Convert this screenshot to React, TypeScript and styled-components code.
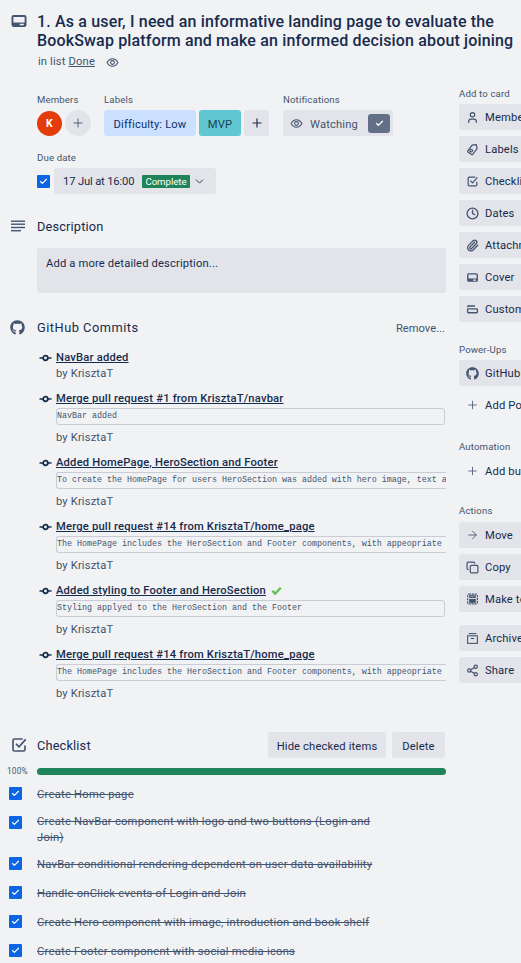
import React from 'react'
import styled, { createGlobalStyle } from 'styled-components'
import { ArrowRight, Check, ChevronDown, Clock, Copy, Paperclip, Plus, Share2, User } from 'lucide-react'
import { FaGithub } from 'react-icons/fa'

const GlobalStyle = createGlobalStyle`
  html, body {
    margin: 0;
    padding: 0;
    background: #f1f2f4;
  }
  body {
    font-family: Roboto, "Noto Sans", sans-serif;
    font-size: 11.2px;
    letter-spacing: 0.15px;
    color: #172b4d;
  }
  * {
    box-sizing: border-box;
  }
`

const Page = styled.div`
  width: 521px;
  height: 963px;
  overflow: hidden;
  padding: 12px 0 0 10px;
  background: #f1f2f4;
`

const Header = styled.header`
  display: grid;
  grid-template-columns: 27px 1fr;
  height: 56px;
`

const Title = styled.h1`
  margin: 0;
  font-size: 16px;
  line-height: 19px;
  font-weight: 500;
  color: #172b4d;
  white-space: nowrap;
  letter-spacing: 0.16px;
`

const InList = styled.div`
  display: flex;
  align-items: center;
  gap: 11px;
  height: 14px;
  margin: 5px 0 0 1px;
  color: #44546f;
  line-height: 14px;

  a {
    color: #44546f;
    text-decoration: underline;
  }
`

const Columns = styled.div`
  display: flex;
  gap: 13px;
  margin-top: 18px;
`

const Main = styled.main`
  width: 436px;
  flex-shrink: 0;
  padding-top: 6px;
`

const Meta = styled.div`
  padding-left: 27px;
`

const MetaRow = styled.div`
  display: flex;
  gap: 13px;
`

const MetaGroup = styled.div<{ $width?: number }>`
  width: ${(p) => (p.$width ? `${p.$width}px` : 'auto')};
`

const SmallLabel = styled.div`
  height: 14px;
  margin-bottom: 4px;
  padding-top: 1px;
  font-size: 9.6px;
  line-height: 14px;
  color: #44546f;
`

const Inline = styled.div<{ $gap: number }>`
  display: flex;
  align-items: center;
  gap: ${(p) => p.$gap}px;
`

const Avatar = styled.div`
  width: 25px;
  height: 25px;
  border-radius: 50%;
  background: #e13c0a;
  color: #fff;
  font-size: 10.4px;
  font-weight: 700;
  display: flex;
  align-items: center;
  justify-content: center;
`

const RoundAdd = styled.div`
  width: 26px;
  height: 26px;
  border-radius: 50%;
  background: #e2e4e9;
  color: #44546f;
  display: flex;
  align-items: center;
  justify-content: center;
`

const Chip = styled.div<{ $bg: string; $color: string; $width: number }>`
  width: ${(p) => p.$width}px;
  height: 26px;
  border-radius: 3px;
  background: ${(p) => p.$bg};
  color: ${(p) => p.$color};
  display: flex;
  align-items: center;
  justify-content: center;
`

const ButtonText = styled.span`
  padding-top: 2px;
`

const Watch = styled.div`
  width: 110px;
  height: 26px;
  border-radius: 3px;
  background: #e2e4e9;
  color: #44546f;
  display: flex;
  align-items: center;
  padding: 0 3px 0 7px;
  gap: 7px;
`

const WatchCheck = styled.span`
  width: 22px;
  height: 19px;
  margin-left: auto;
  border-radius: 3px;
  background: #626f86;
  color: #fff;
  display: flex;
  align-items: center;
  justify-content: center;
`

const DueBlock = styled.div`
  margin-top: 14px;
`

const TickBox = styled.span`
  width: 13px;
  height: 13px;
  flex-shrink: 0;
  border-radius: 1px;
  background: #0c66e4;
  color: #fff;
  display: flex;
  align-items: center;
  justify-content: center;
`

const DateButton = styled.div`
  width: 162px;
  height: 26px;
  border-radius: 3px;
  background: #e2e4e9;
  display: flex;
  align-items: center;
  padding: 0 0 0 9px;
  color: #172b4d;
`

const DateText = styled.span`
  width: 79px;
  letter-spacing: -0.15px;
`

const Badge = styled.span`
  width: 48px;
  height: 13px;
  margin-right: 3px;
  background: #1f845a;
  color: #fff;
  border-radius: 1px;
  font-size: 9.6px;
  letter-spacing: 0;
  line-height: 13px;
  text-align: center;
`

const SectionHead = styled.div<{ $top: number }>`
  display: grid;
  grid-template-columns: 27px 1fr auto;
  align-items: center;
  min-height: 20px;
  margin-top: ${(p) => p.$top}px;
`

const SectionTitle = styled.h2<{ $spacing?: number }>`
  margin: 0;
  padding-top: 2px;
  font-size: 12.8px;
  line-height: 18px;
  font-weight: 400;
  letter-spacing: ${(p) => p.$spacing ?? 0.15}px;
  color: #172b4d;
`

const DescriptionBox = styled.div`
  margin: 12px 0 0 27px;
  height: 45px;
  padding: 8px 9px 0;
  border-radius: 3px;
  background: #e2e4e9;
  line-height: 15px;
  color: #172b4d;
`

const RemoveLink = styled.span`
  color: #44546f;
  padding: 2px 1px 0 0;
  letter-spacing: 0;
`

const Commits = styled.div`
  margin: 13px 0 0 29px;
  overflow: hidden;
  display: flex;
  flex-direction: column;
  gap: 11px;
`

const Commit = styled.div`
  display: grid;
  grid-template-columns: 17px minmax(0, 1fr);
  width: 407px;
`

const CommitGlyph = styled.span`
  height: 15px;
  display: flex;
  align-items: center;
  color: #172b4d;
`

const CommitTitle = styled.a`
  font-size: 11.2px;
  line-height: 15px;
  font-weight: 500;
  letter-spacing: 0.2px;
  color: #172b4d;
  text-decoration: underline;
  display: flex;
  align-items: center;
  gap: 5px;
`

const CommitMessage = styled.pre<{ $long?: boolean }>`
  margin: 2px 0 0;
  height: 17px;
  width: ${(p) => (p.$long ? '420px' : '389px')};
  border: 1px solid #c9ccd6;
  border-right-color: ${(p) => (p.$long ? 'transparent' : '#c9ccd6')};
  border-radius: 3px;
  background: #f1f2f4;
  overflow: hidden;
  font-family: "Liberation Mono", monospace;
  font-size: 8.33px;
  letter-spacing: 0;
  line-height: 15px;
  color: #44546f;
`

const CommitAuthor = styled.div`
  grid-column: 2;
  margin-top: 1px;
  height: 14px;
  padding-top: 1px;
  line-height: 14px;
  color: #44546f;
`

const MessageAuthor = styled(CommitAuthor)`
  margin-top: 5px;
`

const HeadButtons = styled.div`
  display: flex;
  gap: 6px;
  padding-right: 1px;
`

const GreyButton = styled.div<{ $width: number }>`
  width: ${(p) => p.$width}px;
  height: 26px;
  border-radius: 3px;
  background: #e2e4e9;
  color: #172b4d;
  display: flex;
  align-items: center;
  justify-content: center;
`

const Progress = styled.div`
  display: grid;
  grid-template-columns: 27px 1fr;
  align-items: center;
  height: 7px;
  margin-top: 8px;
`

const Percent = styled.span`
  margin-left: -3px;
  font-size: 8.3px;
  color: #44546f;
`

const Bar = styled.div`
  height: 7px;
  border-radius: 4px;
  background: #1f845a;
`

const Items = styled.div`
  display: flex;
  flex-direction: column;
  gap: 12px;
  margin-top: 13px;
`

const Item = styled.div<{ $wrapped?: boolean }>`
  display: flex;
  align-items: flex-start;
  margin: ${(p) => (p.$wrapped ? '0 0 -2px -1px' : '0 0 0 -1px')};
`

const ItemTick = styled.span`
  display: block;
  width: 28px;
  padding-top: 1px;
`

const ItemText = styled.span<{ $wrapped?: boolean }>`
  max-width: 342px;
  margin-top: ${(p) => (p.$wrapped ? '-2px' : '0')};
  padding-top: 1px;
  line-height: 16px;
  letter-spacing: 0.25px;
  color: #44546f;
  text-decoration: line-through;
`

const Side = styled.aside`
  width: 168px;
  flex-shrink: 0;
  display: flex;
  flex-direction: column;
`

const SideLabel = styled.div<{ $top?: number; $bottom?: number }>`
  height: 14px;
  margin: ${(p) => p.$top ?? 0}px 0 ${(p) => p.$bottom ?? 4}px;
  padding-top: 1px;
  font-size: 9.6px;
  line-height: 14px;
  color: #44546f;
`

const SideButton = styled.div<{ $plain?: boolean; $top?: number }>`
  height: 26px;
  flex-shrink: 0;
  margin: ${(p) => p.$top ?? 0}px 0 6px;
  padding-left: 7px;
  border-radius: 3px;
  background: ${(p) => (p.$plain ? 'transparent' : '#e2e4e9')};
  color: #172b4d;
  display: flex;
  align-items: center;
  gap: 6px;
  white-space: nowrap;
`

const SideIcon = styled.span`
  width: 13px;
  display: flex;
  justify-content: center;
  color: #44546f;
`

const IconSlot = styled.span<{ $color?: string }>`
  display: flex;
  color: ${(p) => p.$color ?? '#44546f'};
`

type IconProps = { size?: number }

const CardIcon = ({ size = 18 }: IconProps) => (
  <svg width={size} height={size} viewBox="0 0 24 24" fill="currentColor">
    <path fillRule="evenodd" d="M5 4h14a3 3 0 0 1 3 3v10a3 3 0 0 1-3 3H5a3 3 0 0 1-3-3V7a3 3 0 0 1 3-3zm-.5 2.500v7.500h15V6.500h-15zM13 15.800v2h5.500v-2H13z" />
  </svg>
)

const EyeIcon = ({ size = 13 }: IconProps) => (
  <svg width={size} height={size} viewBox="0 0 24 24" fill="none" stroke="currentColor" strokeWidth="2">
    <path d="M2 12c2.500-4.500 6-7 10-7s7.500 2.500 10 7c-2.500 4.500-6 7-10 7s-7.500-2.500-10-7z" />
    <circle cx="12" cy="12" r="3.500" />
  </svg>
)

const LinesIcon = () => (
  <svg width="16" height="13" viewBox="0 0 16 13" fill="currentColor">
    <rect x="1" y="0.500" width="14" height="1.400" />
    <rect x="1" y="3.500" width="14" height="1.400" />
    <rect x="1" y="6.800" width="14" height="1.400" />
    <rect x="1" y="10" width="10" height="1.400" />
  </svg>
)

const ChecklistIcon = ({ size = 18 }: IconProps) => (
  <svg width={size} height={size} viewBox="0 0 24 24" fill="none" stroke="currentColor" strokeWidth="2.200">
    <path d="M20 12.500V18a2 2 0 0 1-2 2H6a2 2 0 0 1-2-2V6a2 2 0 0 1 2-2h11" />
    <path d="M8 10.500l4 4 9-10" />
  </svg>
)

const CommitIcon = () => (
  <svg width="13" height="10" viewBox="0 0 13 10" fill="none" stroke="currentColor">
    <circle cx="6.500" cy="5" r="2.300" strokeWidth="1.700" />
    <path d="M0.500 5h3.500M9 5h3.500" strokeWidth="1.600" />
  </svg>
)

const LabelIcon = () => (
  <svg width="13" height="13" viewBox="0 0 24 24" fill="none" stroke="currentColor" strokeWidth="2.200">
    <path d="M3 13.500L12.500 4h7a1 1 0 0 1 1 1v6.500L11 21a1.500 1.500 0 0 1-2 0L3 15.500a1.500 1.500 0 0 1 0-2z" transform="rotate(-8 12 12)" />
    <circle cx="9.500" cy="14" r="2.500" />
  </svg>
)

const FieldsIcon = () => (
  <svg width="13" height="13" viewBox="0 0 24 24" fill="none" stroke="currentColor" strokeWidth="2.400">
    <path d="M3 8V7a1.500 1.500 0 0 1 1.500-1.500h12" />
    <rect x="3" y="11" width="18" height="7" rx="1.500" />
  </svg>
)

const TemplateIcon = () => (
  <svg width="13" height="14" viewBox="0 0 24 24" fill="none" stroke="currentColor" strokeWidth="2.200">
    <rect x="3" y="3" width="18" height="18" rx="2" strokeDasharray="4 1.500" />
    <rect x="7" y="13" width="10" height="5" fill="currentColor" />
    <rect x="7" y="6" width="10" height="3" />
  </svg>
)

const ArchiveIcon = () => (
  <svg width="13" height="13" viewBox="0 0 24 24" fill="none" stroke="currentColor" strokeWidth="2">
    <path d="M5 3h14" />
    <rect x="3" y="7" width="18" height="14" />
    <path d="M9 12h6" />
  </svg>
)

const CommitCheck = () => (
  <svg width="11" height="10" viewBox="0 0 12 10" fill="#5cc04a">
    <path d="M0.500 5.500L2.300 3.800 4.500 6 9.800 0.500 11.500 2.200 4.500 9.500z" />
  </svg>
)

const commits = [
  { title: 'NavBar added' },
  { title: 'Merge pull request #1 from KrisztaT/navbar', message: 'NavBar added' },
  {
    title: 'Added HomePage, HeroSection and Footer',
    message: 'To create the HomePage for users HeroSection was added with hero image, text a',
    long: true,
  },
  {
    title: 'Merge pull request #14 from KrisztaT/home_page',
    message: 'The HomePage includes the HeroSection and Footer components, with appeopriate',
    long: true,
  },
  {
    title: 'Added styling to Footer and HeroSection',
    message: 'Styling applyed to the HeroSection and the Footer',
    passed: true,
  },
  {
    title: 'Merge pull request #14 from KrisztaT/home_page',
    message: 'The HomePage includes the HeroSection and Footer components, with appeopriate',
    long: true,
  },
]

const tasks = [
  { text: 'Create Home page' },
  { text: 'Create NavBar component with logo and two buttons (Login and Join)', wrapped: true },
  { text: 'NavBar conditional rendering dependent on user data availability' },
  { text: 'Handle onClick events of Login and Join' },
  { text: 'Create Hero component with image, introduction and book shelf' },
  { text: 'Create Footer component with social media icons' },
]

const addToCard = [
  { label: 'Members', icon: <User size={13} strokeWidth={2.2} /> },
  { label: 'Labels', icon: <LabelIcon /> },
  { label: 'Checklist', icon: <ChecklistIcon size={13} /> },
  { label: 'Dates', icon: <Clock size={13} strokeWidth={2.4} /> },
  { label: 'Attachment', icon: <Paperclip size={13} strokeWidth={2.4} /> },
  { label: 'Cover', icon: <CardIcon size={13} /> },
  { label: 'Custom Fields', icon: <FieldsIcon /> },
]

const actions = [
  { label: 'Move', icon: <ArrowRight size={14} strokeWidth={1.6} />, top: 0 },
  { label: 'Copy', icon: <Copy size={13} strokeWidth={2.2} />, top: 0 },
  { label: 'Make template', icon: <TemplateIcon />, top: 0 },
  { label: 'Archive', icon: <ArchiveIcon />, top: 7 },
  { label: 'Share', icon: <Share2 size={13} strokeWidth={2.2} />, top: 0 },
]

export default function App() {
  return (
    <Page>
      <GlobalStyle />
      <Header>
        <IconSlot>
          <CardIcon />
        </IconSlot>
        <div>
          <Title>
            1. As a user, I need an informative landing page to evaluate the
            <br />
            BookSwap platform and make an informed decision about joining
          </Title>
          <InList>
            <span>
              in list <a href="#done">Done</a>
            </span>
            <EyeIcon />
          </InList>
        </div>
      </Header>

      <Columns>
        <Main>
          <Meta>
            <MetaRow>
              <MetaGroup $width={54}>
                <SmallLabel>Members</SmallLabel>
                <Inline $gap={3}>
                  <Avatar>K</Avatar>
                  <RoundAdd>
                    <Plus size={14} strokeWidth={1.5} />
                  </RoundAdd>
                </Inline>
              </MetaGroup>
              <MetaGroup $width={166}>
                <SmallLabel>Labels</SmallLabel>
                <Inline $gap={3}>
                  <Chip $bg="#cce0ff" $color="#09326c" $width={92}>
                    <ButtonText>Difficulty: Low</ButtonText>
                  </Chip>
                  <Chip $bg="#60c6d2" $color="#164555" $width={42}>
                    <ButtonText>MVP</ButtonText>
                  </Chip>
                  <Chip $bg="#e2e4e9" $color="#172b4d" $width={25}>
                    <Plus size={14} strokeWidth={2} />
                  </Chip>
                </Inline>
              </MetaGroup>
              <MetaGroup>
                <SmallLabel>Notifications</SmallLabel>
                <Watch>
                  <EyeIcon />
                  <ButtonText>Watching</ButtonText>
                  <WatchCheck>
                    <Check size={9} strokeWidth={3.5} />
                  </WatchCheck>
                </Watch>
              </MetaGroup>
            </MetaRow>
            <DueBlock>
              <SmallLabel>Due date</SmallLabel>
              <Inline $gap={4}>
                <TickBox>
                  <Check size={9} strokeWidth={3} />
                </TickBox>
                <DateButton>
                  <DateText>17 Jul at 16:00</DateText>
                  <Badge>Complete</Badge>
                  <IconSlot $color="#172b4d">
                    <ChevronDown size={13} strokeWidth={1.6} />
                  </IconSlot>
                </DateButton>
              </Inline>
            </DueBlock>
          </Meta>

          <SectionHead $top={22}>
            <IconSlot>
              <LinesIcon />
            </IconSlot>
            <SectionTitle>Description</SectionTitle>
          </SectionHead>
          <DescriptionBox>Add a more detailed description...</DescriptionBox>

          <SectionHead $top={24}>
            <IconSlot $color="#44546f">
              <FaGithub size={15} />
            </IconSlot>
            <SectionTitle $spacing={0.5}>GitHub Commits</SectionTitle>
            <RemoveLink>Remove...</RemoveLink>
          </SectionHead>
          <Commits>
            {commits.map((commit, i) => (
              <Commit key={i}>
                <CommitGlyph>
                  <CommitIcon />
                </CommitGlyph>
                <CommitTitle href="#commit">
                  {commit.title}
                  {commit.passed && <CommitCheck />}
                </CommitTitle>
                {commit.message ? (
                  <>
                    <span />
                    <CommitMessage $long={commit.long}>{commit.message}</CommitMessage>
                    <MessageAuthor>by KrisztaT</MessageAuthor>
                  </>
                ) : (
                  <CommitAuthor>by KrisztaT</CommitAuthor>
                )}
              </Commit>
            ))}
          </Commits>

          <SectionHead $top={32}>
            <IconSlot>
              <ChecklistIcon />
            </IconSlot>
            <SectionTitle>Checklist</SectionTitle>
            <HeadButtons>
              <GreyButton $width={118}>
                <ButtonText>Hide checked items</ButtonText>
              </GreyButton>
              <GreyButton $width={53}>
                <ButtonText>Delete</ButtonText>
              </GreyButton>
            </HeadButtons>
          </SectionHead>
          <Progress>
            <Percent>100%</Percent>
            <Bar />
          </Progress>
          <Items>
            {tasks.map((task) => (
              <Item key={task.text} $wrapped={task.wrapped}>
                <ItemTick>
                  <TickBox>
                    <Check size={9} strokeWidth={3} />
                  </TickBox>
                </ItemTick>
                <ItemText $wrapped={task.wrapped}>{task.text}</ItemText>
              </Item>
            ))}
          </Items>
        </Main>

        <Side>
          <SideLabel>Add to card</SideLabel>
          {addToCard.map((b) => (
            <SideButton key={b.label}>
              <SideIcon>{b.icon}</SideIcon>
              {b.label}
            </SideButton>
          ))}
          <SideLabel $top={14}>Power-Ups</SideLabel>
          <SideButton>
            <SideIcon>
              <FaGithub size={13} />
            </SideIcon>
            GitHub
          </SideButton>
          <SideButton $plain>
            <SideIcon>
              <Plus size={14} strokeWidth={1.5} />
            </SideIcon>
            Add Power-Ups
          </SideButton>
          <SideLabel $top={15} $bottom={5}>Automation</SideLabel>
          <SideButton $plain>
            <SideIcon>
              <Plus size={14} strokeWidth={1.5} />
            </SideIcon>
            Add button
          </SideButton>
          <SideLabel $top={13} $bottom={5}>Actions</SideLabel>
          {actions.map((b) => (
            <SideButton key={b.label} $top={b.top}>
              <SideIcon>{b.icon}</SideIcon>
              {b.label}
            </SideButton>
          ))}
        </Side>
      </Columns>
    </Page>
  )
}
